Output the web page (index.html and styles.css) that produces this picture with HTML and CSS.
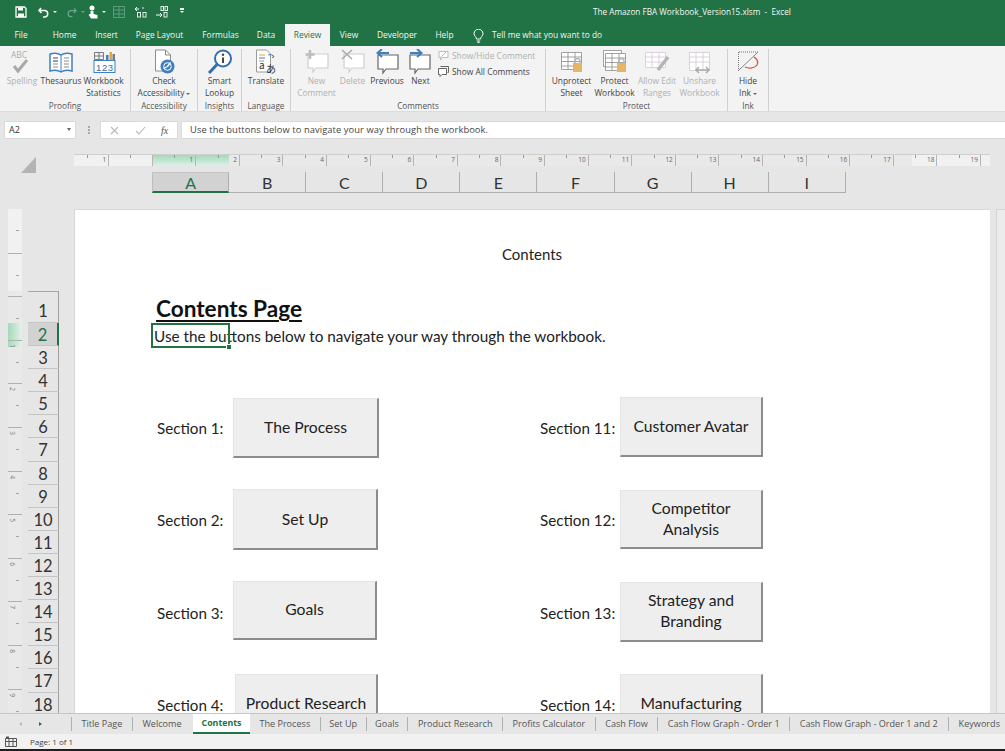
FILE: index.html
```html
<!DOCTYPE html>
<html lang="en">
<head>
<meta charset="utf-8">
<title>The Amazon FBA Workbook_Version15.xlsm - Excel</title>
<link rel="stylesheet" href="styles.css">
</head>
<body>
<div class="app">
  <header class="titlebar">
    <div class="qat">
      <svg class="q q-save" width="12" height="12" viewBox="0 0 12 12"><path d="M1 1h8.500L11 2.500V11H1z" fill="none" stroke="#fff" stroke-width="1.300"/><path d="M3 1.500h5v3H3zM3 7.500h6V11H3z" fill="#fff"/></svg>
      <svg class="q q-undo" width="12" height="11" viewBox="0 0 12 11"><path d="M3 1 1 3.500 3.500 6M1.500 3.500H7a3.300 3.300 0 0 1 0 6.500H5" fill="none" stroke="#fff" stroke-width="1.500"/></svg>
      <span class="caret caret-a"></span>
      <svg class="q q-redo" width="11" height="11" viewBox="0 0 12 11"><path d="M9 1l2 2.500L8.500 6M10.500 3.500H5a3.300 3.300 0 0 0 0 6.500h2" fill="none" stroke="#6ea58a" stroke-width="1.300"/></svg>
      <span class="caret caret-dim"></span>
      <svg class="q q-touch" width="12" height="14" viewBox="0 0 12 14"><circle cx="5" cy="3" r="2.500" fill="#fff"/><path d="M3.500 6h3v3l4 1v3.500H4L1.500 9.500l2-.5z" fill="#fff"/></svg>
      <span class="caret caret-a"></span>
      <svg class="q q-grid" width="12" height="12" viewBox="0 0 12 12"><path d="M.5.500h11v11H.5zM.5 4h11M.5 8h11M6 .5v11" fill="none" stroke="#5f9c7e"/></svg>
      <span class="q q-dec"><svg width="14" height="12" viewBox="0 0 14 12"><path d="M1 3h4M3 1l-2 2 2 2" fill="none" stroke="#fff"/><circle cx="9" cy="2" r=".8" fill="#fff"/><rect x="3.500" y="6.500" width="3" height="4.500" fill="none" stroke="#e2efe8"/><rect x="9" y="6.500" width="3" height="4.500" fill="none" stroke="#e2efe8"/></svg></span>
      <span class="q q-inc"><svg width="13" height="12" viewBox="0 0 13 12"><rect x="6" y=".5" width="2.500" height="4" fill="none" stroke="#e2efe8"/><rect x="10" y=".5" width="2.500" height="4" fill="none" stroke="#e2efe8"/><path d="M1 9h6M5 7l2 2-2 2" fill="none" stroke="#fff"/><rect x="9" y="6.500" width="3" height="4.500" fill="none" stroke="#e2efe8"/></svg></span>
      <span class="caret caret-end"></span>
    </div>
    <div class="doc-title">The Amazon FBA Workbook_Version15.xlsm&nbsp; -&nbsp; Excel</div>
    <nav class="tabs">
      <span class="tab t-file">File</span>
      <span class="tab t-home">Home</span>
      <span class="tab t-insert">Insert</span>
      <span class="tab t-layout">Page Layout</span>
      <span class="tab t-formulas">Formulas</span>
      <span class="tab t-data">Data</span>
      <span class="tab tab-active">Review</span>
      <span class="tab t-view">View</span>
      <span class="tab t-dev">Developer</span>
      <span class="tab t-help">Help</span>
      <svg class="bulb" width="11" height="14" viewBox="0 0 11 14"><path d="M3.500 10C3.500 8 1 7 1 4.700a4.500 4.500 0 0 1 9 0C10 7 7.500 8 7.500 10zM3.800 12h3.400M4.500 13.500h2" fill="none" stroke="#fff"/></svg>
      <span class="tab t-tell">Tell me what you want to do</span>
    </nav>
  </header>

  <section class="ribbon">
    <div class="group g-proof">
      <div class="tools">
        <div class="tool dis w-spell">
          <svg class="ico" width="24" height="26" viewBox="0 0 24 26"><text x="1" y="9" class="abc">ABC</text><path d="M4 17l4 5 9-11" fill="none" stroke="#a9a9a9" stroke-width="3"/></svg>
          <span>Spelling</span>
        </div>
        <div class="tool w-thes">
          <svg class="ico" width="24" height="26" viewBox="0 0 24 26"><path d="M1 5c4-1 8-1 11 1 3-2 7-2 11-1v17c-4-1-8-1-11 1-3-2-7-2-11-1z" fill="#fff" stroke="#3f7fbf" stroke-width="1.500"/><path d="M12 6v17" stroke="#3f7fbf"/><path d="M4 9h5M4 12h5M4 15h5M4 18h5M15 9h5M15 12h5M15 15h5M15 18h5" stroke="#8c8c8c"/><path d="M4 9h5" stroke="#d25a5a"/><path d="M4 12h5" stroke="#3f7fbf"/></svg>
          <span>Thesaurus</span>
        </div>
        <div class="tool w-stat">
          <svg class="ico" width="24" height="26" viewBox="0 0 24 26"><path d="M2.500 3.500h9v7h-9zM2.500 7h9M7 3.500v7" fill="none" stroke="#7b7b7b"/><path d="M14 6h2.500v5H14z" fill="#3f7fbf"/><path d="M17.500 3h2.500v8h-2.500z" fill="#e0a53c"/><path d="M20.500 5H23v6h-2.500z" fill="#7b7b7b"/><rect x="2" y="11.500" width="21" height="12" fill="#fff" stroke="#3f7fbf"/><text x="4" y="21.500" class="num">123</text></svg>
          <span>Workbook<br>Statistics</span>
        </div>
      </div>
      <div class="glabel">Proofing</div>
    </div>

    <div class="group g-access">
      <div class="tools">
        <div class="tool w-check">
          <svg class="ico" width="24" height="26" viewBox="0 0 24 26"><path d="M3.500 1h10l5 5v16h-15z" fill="#fff" stroke="#8c8c8c"/><path d="M13.500 1v5h5" fill="none" stroke="#8c8c8c"/><circle cx="15.500" cy="17.500" r="7" fill="#3f7fbf"/><circle cx="15.500" cy="17.500" r="3.800" fill="none" stroke="#fff"/><path d="M15.500 17.500l3-4M15.500 17.500l-4 2" stroke="#fff" stroke-width="1.300"/></svg>
          <span>Check<br>Accessibility<i class="drop"></i></span>
        </div>
      </div>
      <div class="glabel">Accessibility</div>
    </div>

    <div class="group g-insight">
      <div class="tools">
        <div class="tool w-smart">
          <svg class="ico" width="28" height="26" viewBox="0 0 28 26"><circle cx="17" cy="9.500" r="8" fill="#fff" stroke="#2f6fae" stroke-width="2"/><path d="M11 15.500 3 24" stroke="#2f6fae" stroke-width="3"/><path d="M17 8.500v5.500" stroke="#444" stroke-width="2"/><circle cx="17" cy="5.700" r="1.200" fill="#444"/></svg>
          <span>Smart<br>Lookup</span>
        </div>
      </div>
      <div class="glabel">Insights</div>
    </div>

    <div class="group g-lang">
      <div class="tools">
        <div class="tool w-trans">
          <svg class="ico" width="24" height="26" viewBox="0 0 24 26"><path d="M2.500 1h10l4 4v18h-14z" fill="#fff" stroke="#9a9a9a"/><path d="M5 6h6" stroke="#e0a53c"/><path d="M5 9h6" stroke="#3f7fbf"/><path d="M5 12h5" stroke="#9a9a9a"/><path d="M14 6c3-1 5 0 6 2M20 8l-1.500-2M20 8l-2 .5" fill="none" stroke="#3f7fbf"/><text x="5" y="20" class="tr">a</text><text x="12" y="24" class="tr">あ</text></svg>
          <span>Translate</span>
        </div>
      </div>
      <div class="glabel">Language</div>
    </div>

    <div class="group g-comments">
      <div class="tools">
        <div class="tool dis w-new">
          <svg class="ico" width="24" height="26" viewBox="0 0 24 26"><path d="M3 5h20v14H11l-3 4v-4H3z" fill="#fff" stroke="#cfcfcf" stroke-width="1.200"/><path d="M5 1v9M.5 5.500h9" stroke="#bdbdbd" stroke-width="2.500"/></svg>
          <span>New<br>Comment</span>
        </div>
        <div class="tool dis w-del">
          <svg class="ico" width="24" height="26" viewBox="0 0 24 26"><path d="M3 5h20v14H11l-3 4v-4H3z" fill="#fff" stroke="#cfcfcf" stroke-width="1.200"/><path d="M1 1l10 9M11 1 1 10" stroke="#ababab" stroke-width="1.600"/></svg>
          <span>Delete</span>
        </div>
        <div class="tool w-prev">
          <svg class="ico" width="24" height="26" viewBox="0 0 24 26"><path d="M3 6h20v14H11l-3 4v-4H3z" fill="#fff" stroke="#666" stroke-width="1.200"/><path d="M14 4H3M7 0 2.500 4 7 8" fill="none" stroke="#3f7fbf" stroke-width="2"/></svg>
          <span>Previous</span>
        </div>
        <div class="tool w-next">
          <svg class="ico" width="24" height="26" viewBox="0 0 24 26"><path d="M1 6h20v14H9l-3 4v-4H1z" fill="#fff" stroke="#666" stroke-width="1.200"/><path d="M1 4h11M8 0l4.500 4L8 8" fill="none" stroke="#3f7fbf" stroke-width="2"/></svg>
          <span>Next</span>
        </div>
        <div class="stack">
          <div class="row-tool dis">
            <svg width="11" height="11" viewBox="0 0 11 11"><path d="M1 1.500h9v6H4.500L2.500 10V7.500H1z" fill="#fff" stroke="#bbb"/><path d="M2 8 9 1" stroke="#bbb"/></svg>
            <span>Show/Hide Comment</span>
          </div>
          <div class="row-tool">
            <svg width="11" height="11" viewBox="0 0 11 11"><path d="M2.500.5h8v6h-1" fill="none" stroke="#666"/><path d="M.5 2.500h8v6H4l-2 2v-2H.5z" fill="#fff" stroke="#666"/></svg>
            <span>Show All Comments</span>
          </div>
        </div>
      </div>
      <div class="glabel">Comments</div>
    </div>

    <div class="group g-protect">
      <div class="tools">
        <div class="tool w-unp">
          <svg class="ico" width="24" height="26" viewBox="0 0 24 26"><path d="M1.500 3.500h20v17h-20zM1.500 8h20M1.500 12.500h20M1.500 17h20M8 3.500v17M15 3.500v17" fill="#fff" stroke="#8a8a8a" stroke-width=".8"/><rect x="13" y="14" width="9" height="9" fill="#e3b565"/><path d="M15 14v-2a2.500 2.500 0 0 1 5 0v2" fill="none" stroke="#b5b5b5" stroke-width="1.300"/></svg>
          <span>Unprotect<br>Sheet</span>
        </div>
        <div class="tool w-pro">
          <svg class="ico" width="26" height="26" viewBox="0 0 26 26"><path d="M1.500 1.500h18v16h-18z" fill="#fff" stroke="#8a8a8a" stroke-width=".8"/><path d="M3.500 4.500h20v17h-20zM3.500 9h20M3.500 13.500h20M3.500 18h20M10 4.500v17M17 4.500v17" fill="#fff" stroke="#8a8a8a" stroke-width=".8"/><rect x="15" y="14" width="9" height="9" fill="#e3b565"/><path d="M17 14v-2a2.500 2.500 0 0 1 5 0v2" fill="none" stroke="#b5b5b5" stroke-width="1.300"/></svg>
          <span>Protect<br>Workbook</span>
        </div>
        <div class="tool dis w-allow">
          <svg class="ico" width="26" height="26" viewBox="0 0 26 26"><path d="M1.500 3.500h20v15h-20zM1.500 8h20M1.500 13h20M8 3.500v15M15 3.500v15" fill="#fff" stroke="#d3c6d3" stroke-width=".8"/><path d="M24 8 14 21" stroke="#b5b5b5" stroke-width="3.500"/></svg>
          <span>Allow Edit<br>Ranges</span>
        </div>
        <div class="tool dis w-unsh">
          <svg class="ico" width="24" height="26" viewBox="0 0 24 26"><path d="M1.500 3.500h20v18h-20zM1.500 8h20M1.500 13h20M8 3.500v18M15 3.500v18" fill="#fff" stroke="#d3c6d3" stroke-width=".8"/><path d="M8 21h13M11 18l-3 3 3 3M18 18l3 3-3 3" fill="none" stroke="#ababab" stroke-width="1.500"/></svg>
          <span>Unshare<br>Workbook</span>
        </div>
      </div>
      <div class="glabel">Protect</div>
    </div>

    <div class="group g-ink">
      <div class="tools">
        <div class="tool w-ink">
          <svg class="ico" width="24" height="26" viewBox="0 0 24 26"><path d="M3 3h19M2.500 3v18" fill="none" stroke="#777" stroke-dasharray="1 1"/><path d="M2 22 22 3" stroke="#888"/><path d="M18 8c3 2 5 4 3 8-2 3-8 4-12 2" fill="none" stroke="#d9573b" stroke-width="1.300"/></svg>
          <span>Hide<br>Ink<i class="drop"></i></span>
        </div>
      </div>
      <div class="glabel">Ink</div>
    </div>
  </section>

  <section class="formula">
    <div class="namebox">A2<i class="drop nb"></i></div>
    <div class="grip"></div>
    <div class="fbtns">
      <svg width="9" height="9" viewBox="0 0 9 9"><path d="M1 1l7 7M8 1 1 8" stroke="#b9b9b9" stroke-width="1.100"/></svg>
      <svg width="11" height="9" viewBox="0 0 11 9"><path d="M1 5l3 3 6-7" fill="none" stroke="#b9b9b9" stroke-width="1.100"/></svg>
      <span class="fx">fx</span>
    </div>
    <div class="finput">Use the buttons below to navigate your way through the workbook.</div>
  </section>

  <section class="sheethead">
    <div class="corner-cell"><div class="corner"></div></div>
    <div class="heads">
      <div class="hruler">
        <span class="rc">1</span><span class="rc"></span><span class="rc">1</span><span class="rc">2</span><span class="rc">3</span><span class="rc">4</span><span class="rc">5</span><span class="rc">6</span><span class="rc">7</span><span class="rc">8</span><span class="rc">9</span><span class="rc">10</span><span class="rc">11</span><span class="rc">12</span><span class="rc">13</span><span class="rc">14</span><span class="rc">15</span><span class="rc">16</span><span class="rc">17</span><span class="rc">18</span><span class="rc">19</span><span class="rc"></span>
      </div>
      <div class="cols">
        <span class="col col-sel">A</span><span class="col">B</span><span class="col">C</span><span class="col">D</span><span class="col">E</span><span class="col">F</span><span class="col">G</span><span class="col">H</span><span class="col">I</span>
      </div>
    </div>
  </section>

  <main class="work">
    <div class="gutter">
      <div class="vruler">
        <span class="vc"></span><span class="vc"></span><span class="vc"></span><span class="vc"><b>1</b></span><span class="vc"><b>2</b></span><span class="vc"><b>3</b></span><span class="vc"><b>4</b></span><span class="vc"><b>5</b></span><span class="vc"><b>6</b></span><span class="vc"><b>7</b></span><span class="vc"><b>8</b></span><span class="vc"><b>9</b></span>
      </div>
      <div class="rows">
        <span class="rw">1</span><span class="rw rw-sel">2</span><span class="rw">3</span><span class="rw">4</span><span class="rw">5</span><span class="rw">6</span><span class="rw">7</span><span class="rw">8</span><span class="rw">9</span><span class="rw">10</span><span class="rw">11</span><span class="rw">12</span><span class="rw">13</span><span class="rw">14</span><span class="rw">15</span><span class="rw">16</span><span class="rw">17</span><span class="rw">18</span>
      </div>
    </div>
    <div class="page">
      <div class="pagehead">Contents</div>
      <h1 class="ptitle">Contents Page</h1>
      <p class="intro">Use the buttons below to navigate your way through the workbook.</p>
      <div class="cell-sel"><i></i></div>
      <div class="sections">
        <div class="sec"><span class="lab">Section 1:</span><span class="btn b1">The Process</span></div>
        <div class="sec right"><span class="lab">Section 11:</span><span class="btn r1">Customer Avatar</span></div>
        <div class="sec"><span class="lab">Section 2:</span><span class="btn b2">Set Up</span></div>
        <div class="sec right"><span class="lab">Section 12:</span><span class="btn r2">Competitor<br>Analysis</span></div>
        <div class="sec"><span class="lab">Section 3:</span><span class="btn b3">Goals</span></div>
        <div class="sec right"><span class="lab">Section 13:</span><span class="btn r3">Strategy and<br>Branding</span></div>
        <div class="sec"><span class="lab">Section 4:</span><span class="btn b4">Product Research</span></div>
        <div class="sec right"><span class="lab">Section 14:</span><span class="btn r4">Manufacturing</span></div>
      </div>
    </div>
    <div class="vscroll"></div>
  </main>

  <footer class="sheettabs">
    <div class="arrows"><i class="al"></i><i class="ar"></i></div>
    <span class="st">Title Page</span>
    <span class="st st-before">Welcome</span>
    <span class="st st-active">Contents</span>
    <span class="st">The Process</span>
    <span class="st st-tight">Set Up</span>
    <span class="st st-tight">Goals</span>
    <span class="st">Product Research</span>
    <span class="st">Profits Calculator</span>
    <span class="st">Cash Flow</span>
    <span class="st">Cash Flow Graph - Order 1</span>
    <span class="st st-wide">Cash Flow Graph - Order 1 and 2</span>
    <span class="st">Keywords</span>
  </footer>
  <div class="status">
    <svg width="12" height="11" viewBox="0 0 12 11"><path d="M.5 2.500h11v8H.5zM.5 5.500h11M4 2.500v8M8 2.500v8" fill="none" stroke="#555"/><path d="M1 .5h3v2H1z" fill="#555"/></svg>
    <span>Page: 1 of 1</span>
  </div>
  <div class="taskbar"></div>
</div>
</body>
</html>
```

FILE: styles.css
```css
* { box-sizing: border-box; }
html, body { margin: 0; height: 100%; overflow: hidden; }
body { font-family: "Open Sans", "Noto Sans", sans-serif; color: #444; background: #e6e6e6; }
.app { width: 1005px; height: 751px; display: flex; flex-direction: column; overflow: hidden; }

/* title bar */
.titlebar { height: 46px; flex: none; background: #217346; display: flex; flex-direction: column; position: relative; color: #f1f6f3; font-size: 8.400px; }
.qat { height: 24px; display: flex; align-items: center; padding-left: 15px; }
.q { flex: none; display: block; }
.q-undo { margin-left: 11px; }
.q-redo { margin-left: 9px; }
.q-touch { margin-left: 2px; }
.q-grid { margin-left: 7px; }
.q-dec { margin-left: 9px; height: 12px; }
.q-inc { margin-left: 7px; height: 12px; }
.caret { display: block; flex: none; width: 0; height: 0; border: 2px solid transparent; border-top: 2.500px solid #fff; border-bottom: 0; margin-left: 3px; }
.caret-dim { border-top-color: #6ea58a; margin-left: 4px; }
.caret-end { margin-left: 12px; box-shadow: 0 -3px 0 0 #fff; }
.doc-title { position: absolute; left: 593px; top: 5px; font-size: 8.200px; line-height: 13px; white-space: nowrap; }
.tabs { height: 22px; display: flex; align-items: stretch; }
.tab { display: flex; align-items: center; justify-content: center; white-space: nowrap; font-size: 8.400px; line-height: 12px; padding-top: 0; flex: none; }
.t-file { margin-left: 15px; width: 12px; }
.t-home { margin-left: 26px; width: 23px; }
.t-insert { margin-left: 20px; width: 21px; }
.t-layout { margin-left: 19px; width: 47px; }
.t-formulas { margin-left: 20px; width: 35px; }
.t-data { margin-left: 20px; width: 16px; }
.tab-active { margin-left: 11px; width: 45px; background: #f3f3f3; color: #217346; }
.t-view { margin-left: 10px; width: 18px; }
.t-dev { margin-left: 20px; width: 38px; }
.t-help { margin-left: 20px; width: 17px; }
.bulb { margin: 5px 0 0 20px; flex: none; }
.t-tell { margin-left: 9px; width: 108px; }

/* ribbon */
.ribbon { height: 66px; flex: none; background: #f3f3f3; display: flex; border-bottom: 1px solid #dcdcdc; padding-top: 3px; }
.group { display: flex; flex-direction: column; flex: none; height: 62px; border-right: 1px solid #d0d0d0; }
.tools { display: flex; flex: 1; }
.glabel { height: 10px; line-height: 10px; font-size: 8.200px; text-align: center; color: #555; margin-bottom: 0; }
.tool { display: flex; flex-direction: column; align-items: center; text-align: center; flex: none; font-size: 8.400px; line-height: 11.500px; white-space: nowrap; }
.tool span { display: block; }
.ico { display: block; height: 26px; flex: none; }
.dis { color: #b0b0b0; }
.drop { display: inline-block; width: 0; height: 0; border: 2px solid transparent; border-top: 2.500px solid #666; border-bottom: 0; margin-left: 2px; vertical-align: 1px; }
.abc { font: 8.500px "Open Sans", sans-serif; fill: #aaa; }
.num { font: 9.500px "Liberation Sans", sans-serif; fill: #2f6fae; letter-spacing: .6px; }
.tr { font: 10px "Noto Sans CJK JP", "Open Sans", sans-serif; fill: #333; }

.g-proof { width: 131px; padding-left: 5px; }
.g-proof .glabel { margin-left: -5px; }
.w-spell { width: 34px; }
.w-thes { width: 42px; margin-left: 1px; }
.w-stat { width: 43px; margin-left: 0; }
.g-access { width: 67px; }
.w-check { width: 66px; }
.g-insight { width: 44px; }
.w-smart { width: 43px; }
.g-lang { width: 49px; }
.w-trans { width: 48px; }
.g-comments { width: 255px; padding-left: 8px; }
.g-comments .glabel { margin-left: -8px; }
.w-new { width: 35px; }
.w-del { width: 35px; margin-left: 1px; }
.w-prev { width: 34px; margin-left: 0; }
.w-next { width: 33px; margin-right: 1px; }
.stack { margin-left: 0; padding-top: 1px; display: flex; flex-direction: column; gap: 5px; }
.row-tool { display: flex; align-items: center; gap: 3px; font-size: 8.400px; line-height: 11px; white-space: nowrap; }
.g-protect { width: 182px; padding-left: 4px; }
.g-protect .glabel { margin-left: -4px; }
.w-unp { width: 43px; }
.w-pro { width: 43px; }
.w-allow { width: 42px; }
.w-unsh { width: 43px; }
.g-ink { width: 41px; }
.w-ink { width: 40px; }

/* formula bar */
.formula { height: 29px; flex: none; display: flex; align-items: flex-start; padding: 9px 0 0 4px; background: #e6e6e6; font-size: 9px; color: #333; }
.namebox { width: 72px; height: 18px; background: #fff; border: 1px solid #dadada; line-height: 16px; padding-left: 4px; position: relative; }
.nb { position: absolute; right: 4px; top: 6px; border-width: 2.500px; border-top-width: 3px; margin: 0; }
.grip { width: 1px; height: 8px; margin: 5px 10px 0 12px; border-left: 2px dotted #aaa; }
.fbtns { width: 78px; height: 18px; background: #fff; border: 1px solid #dadada; display: flex; align-items: center; gap: 16px; padding-left: 9px; }
.fx { font: italic 10px "Liberation Serif", serif; color: #555; margin-left: -1px; }
.finput { flex: 1; margin-left: 3px; height: 18px; background: #fff; border: 1px solid #dadada; border-right: 0; line-height: 16px; padding-left: 8px; font-size: 9.300px; letter-spacing: .1px; white-space: nowrap; color: #444; }

/* rulers and headers */
.sheethead { height: 68px; flex: none; display: flex; padding-top: 13px; }
.corner-cell { width: 74px; flex: none; padding: 3px 0 0 21px; }
.corner { width: 0; height: 0; border-style: solid; border-width: 0 0 16px 15px; border-color: transparent transparent #b4b4b4 transparent; }
.heads { flex: none; width: 916px; }
.hruler { height: 12px; width: 916px; overflow: hidden; display: flex; margin-bottom: 6px;
  background:
    linear-gradient(#f1f1f1, #f1f1f1) 0 0 / 78px 100% no-repeat,
    linear-gradient(#a4d9ba, #dff0e6) 78px 0 / 77px 100% no-repeat,
    linear-gradient(#f1f1f1, #f1f1f1) 838px 0 / 78px 100% no-repeat,
    #e9e9e9;
  border-top: 1px solid #cfcfcf; }
.rc { flex: none; width: 43.600px; height: 11px; border-right: 1px solid #b5b5b5; text-align: right; padding-right: 2px; font-size: 6.500px; line-height: 10px; color: #666; position: relative; }
.rc:first-child { margin-left: -8.500px; }
.rc::before { content: ""; position: absolute; left: 50%; top: 0; height: 3px; border-left: 1px solid #999; }
.cols { display: flex; width: 694px; margin-left: 78px; font-family: Lato, "Open Sans", sans-serif; }
.col { flex: none; width: 77.100px; height: 21px; border-right: 1px solid #aeaeae; border-bottom: 1px solid #aeaeae; font-size: 16px; line-height: 21px; text-align: center; color: #333; }
.col-sel { background: #d2d2d2; color: #217346; border-bottom: 2px solid #217346; border-top: 1px solid #c4c4c4; border-left: 1px solid #bdbdbd; line-height: 20px; }

/* main area */
.work { flex: 1; min-height: 0; display: flex; }
.gutter { width: 74px; flex: none; display: flex; padding-left: 8px; overflow: hidden; }
.vruler { width: 14px; flex: none; height: 504px; overflow: hidden;
  background:
    linear-gradient(#f1f1f1, #f1f1f1) 0 0 / 100% 82px no-repeat,
    linear-gradient(to right, #a4d9ba, #e4f2ea) 0 114px / 100% 24px no-repeat,
    #e9e9e9; }
.vc { display: block; height: 43.600px; border-top: 1px solid #b0b0b0; position: relative; font-size: 6.500px; color: #777; }
.vc:first-child { border-top: 0; }
.vc::before { content: ""; position: absolute; right: 3px; left: 8px; top: 21px; border-top: 1px solid #a5a5a5; }
.vc b { font-weight: 400; display: block; transform: rotate(90deg); width: 8px; line-height: 8px; text-align: center; margin-top: 1px; }
.rows { width: 31px; margin-left: 6px; padding-top: 82px; flex: none; height: 520px; font-family: Lato, "Open Sans", sans-serif; }
.rw { display: block; height: 23.100px; padding-top: 1px; text-align: center; font-size: 16.500px; line-height: 22px; color: #333; border-bottom: 1px solid #c4c4c4; border-right: 1px solid #9f9f9f; }
.rw:first-child { height: 32px; padding-top: 8px; border-top: 1px solid #a8a8a8; }
.rw-sel { background: #d2d2d2; color: #217346; border-right: 2px solid #217346; }

.page { width: 916px; flex: none; background: #fff; position: relative; overflow: hidden; color: #222; border-top: 1px solid #d8d8d8; border-left: 1px solid #d8d8d8; font-family: Lato, "Open Sans", sans-serif; }
.pagehead { position: absolute; left: 427px; top: 35px; font-size: 15px; line-height: 19px; white-space: nowrap; }
.ptitle { margin: 0; padding: 84px 0 0 81px; font-size: 22.600px; line-height: 30px; font-weight: 700; color: #111; text-decoration: underline; text-decoration-thickness: 2px; text-underline-offset: 3px; }
.intro { margin: 0; padding: 0 0 0 79px; font-size: 15.300px; line-height: 24px; height: 24px; white-space: nowrap; color: #222; }
.cell-sel { position: absolute; left: 76px; top: 113px; width: 79px; height: 25px; border: 2px solid #217346; }
.cell-sel i { position: absolute; right: -3px; bottom: -3px; width: 4px; height: 4px; background: #217346; outline: 1px solid #fff; }

.sections { display: grid; grid-template-columns: 383px 1fr; grid-auto-rows: 92.300px; padding: 50px 0 0 82px; }
.sec { display: flex; align-items: flex-start; }
.lab { flex: none; width: 76px; font-size: 15.200px; line-height: 20px; margin-top: 20px; white-space: nowrap; }
.right .lab { width: 80px; }
.btn { flex: none; display: flex; align-items: center; justify-content: center; text-align: center; background: #eee; border-right: 2px solid #8c8c8c; border-bottom: 2px solid #8c8c8c; border-top: 1px solid #e4e4e4; border-left: 1px solid #e4e4e4; font-size: 15.700px; line-height: 21px; color: #222; }
.b1 { width: 146px; height: 60px; }
.b2 { width: 145px; height: 61px; margin-top: -1px; }
.b3 { width: 144px; height: 59px; margin-top: -2px; }
.b4 { width: 143px; height: 60px; margin: -1px 0 0 2px; }
.r1 { width: 143px; height: 60px; margin-top: -1px; }
.r2 { width: 143px; height: 59px; }
.r3 { width: 143px; height: 60px; margin-top: -1px; }
.r4 { width: 143px; height: 60px; margin-top: -1px; }

.vscroll { flex: 1; margin-left: 6px; background: #ececec; border-left: 1px solid #d4d4d4; border-top: 1px solid #d4d4d4; }

/* sheet tabs */
.sheettabs { height: 21px; flex: none; display: flex; align-items: stretch; background: #e6e6e6; border-top: 1px solid #c6c6c6; overflow: hidden; font-size: 9.100px; color: #555; white-space: nowrap; }
.arrows { width: 72px; flex: none; display: flex; align-items: center; gap: 17px; padding-left: 19px; border-right: 1px solid #b0b0b0; margin: 3px 0; }
.al, .ar { display: block; width: 0; height: 0; border: 2.500px solid transparent; }
.al { border-right: 3px solid #bbb; border-left: 0; }
.ar { border-left: 3px solid #217346; border-right: 0; }
.st { flex: none; display: flex; align-items: center; padding: 0 9.500px 1px; border-right: 1px solid #b0b0b0; margin: 3px 0; }
.st:last-child { border-right: 0; }
.st-before { border-right: 0; padding-right: 11.500px; }
.st-tight { padding: 0 8.500px 1px; }
.st-wide { padding-right: 10.500px; }
.st-active { background: #fff; color: #217346; font-size: 8.800px; font-weight: 700; border-right: 0; border-bottom: 2px solid #217346; margin: -1px 0 0; padding: 0 8.500px 0; }
.status { height: 15px; flex: none; background: #f1f1f1; display: flex; align-items: center; gap: 13px; padding-left: 5px; font-size: 8px; color: #444; }
.taskbar { height: 2px; flex: none; background: #1f1f1f; }
```
